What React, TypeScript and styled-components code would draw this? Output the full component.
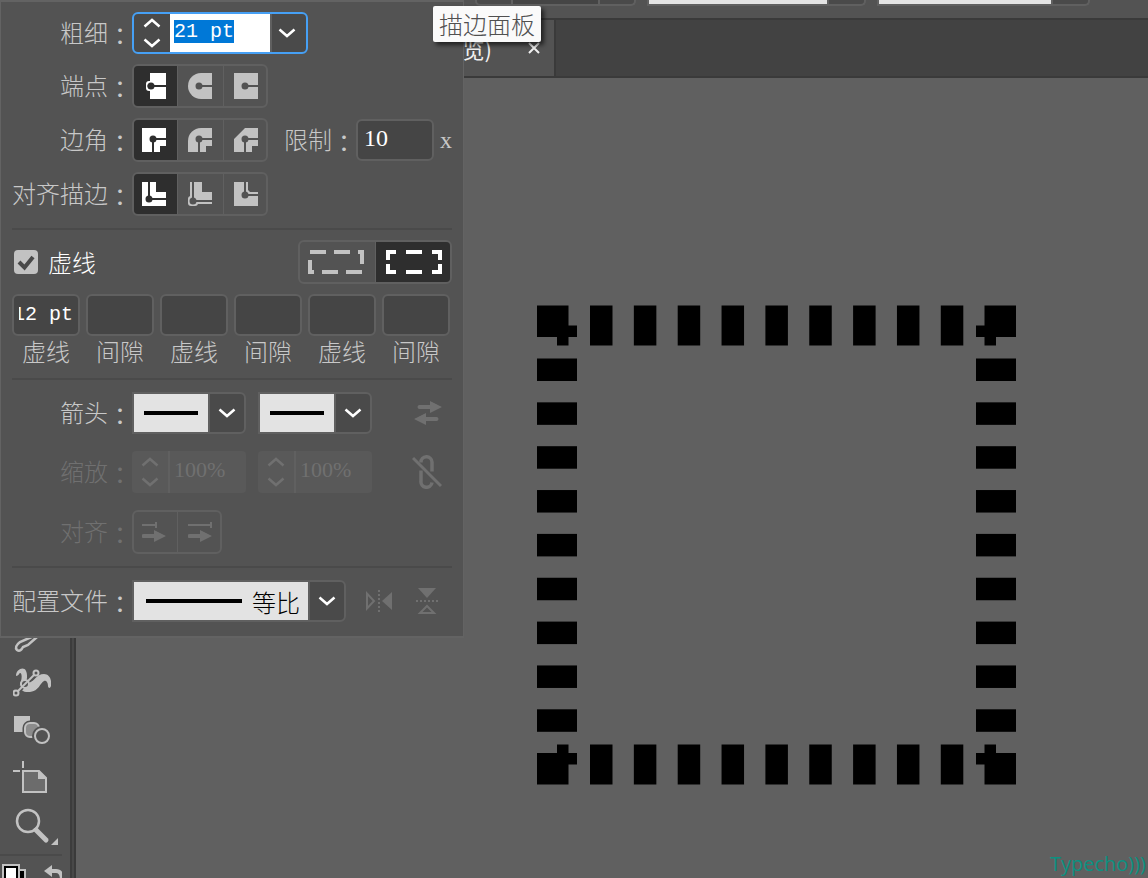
import React, { useEffect, useRef } from "react";
import styled, { createGlobalStyle, css } from "styled-components";

const c = {
  panel: "#535353",
  edge: "#606060",
  field: "#454545",
  active: "#2e2e2e",
  line: "#4a4a4a",
  text: "#c8c8c8",
  off: "#707070",
  icon: "#c2c2c2",
  paper: "#e3e3e3",
};

const GlobalStyle = createGlobalStyle`
  *, *::before, *::after { box-sizing: border-box; }
  body {
    margin: 0;
    background: #606060;
    color: ${c.text};
    font-family: "Noto Sans CJK SC", sans-serif;
    font-weight: 300;
    font-size: 24px;
  }
  button, input, select { font: inherit; color: inherit; margin: 0; padding: 0; border: 0; border-radius: 0; background: none; outline: none; }
  svg { display: block; flex: none; }
`;

/* ---------- application frame ---------- */

const Frame = styled.div`
  position: relative;
  display: flex;
  flex-direction: column;
  height: 100vh;
  overflow: hidden;
`;

const ControlBar = styled.header`
  display: flex;
  gap: 11px;
  height: 20px;
  padding-left: 475px;
  background: ${c.panel};
  border-bottom: 2px solid #3a3a3a;
`;

const BarBox = styled.div<{ $light?: boolean }>`
  display: flex;
  height: 6px;
  padding-right: ${(p) => (p.$light ? 35 : 34)}px;
  background: #4a4a4a;
  border: 2px solid ${c.edge};
  border-top: 0;
  border-radius: 0 0 5px ${(p) => (p.$light ? 0 : 5)}px;
`;

const BarValue = styled.span<{ $light?: boolean; $w: number }>`
  width: ${(p) => p.$w}px;
  margin-left: ${(p) => (p.$light ? 0 : 34)}px;
  background: ${(p) => (p.$light ? c.paper : c.field)};
  border-right: 2px solid ${c.edge};
  border-left: ${(p) => (p.$light ? 0 : 2)}px solid ${c.edge};
`;

const TabBar = styled.nav`
  display: flex;
  height: 58px;
  background: #424242;
  border-bottom: 2px solid #3a3a3a;
`;

const Tab = styled.div`
  display: flex;
  align-items: center;
  justify-content: flex-end;
  gap: 34px;
  width: 556px;
  padding-right: 12px;
  background: ${c.panel};
  border-right: 2px solid #3a3a3a;
  color: #f0f0f0;
  font-size: 22px;
  font-weight: 400;
`;

const TabClose = styled.button`
  display: grid;
  place-items: center;
  width: 16px;
  height: 24px;
`;

const Workspace = styled.main`
  flex: 1;
  display: flex;
  min-height: 0;
`;

const Toolbar = styled.aside`
  display: flex;
  flex-direction: column;
  justify-content: flex-end;
  width: 76px;
  background: ${c.panel};
  border-right: 2px solid #3a3a3a;
  box-shadow: inset -2px 0 #484848, inset -4px 0 #3c3c3c;
`;

const Tool = styled.button`
  display: grid;
  place-items: center;
  flex: none;
  width: 64px;
  height: 48px;
`;

const ToolFooter = styled.div`
  display: flex;
  gap: 16px;
  height: 24px;
  margin: 4px 12px 0 0;
  padding-top: 8px;
  border-top: 2px solid ${c.line};
  overflow: hidden;
`;

const FooterButton = styled.button`
  width: 24px;
  height: 24px;
  margin-left: 2px;
  flex: none;
`;

const Canvas = styled.section`
  position: relative;
  flex: 1;
  background: #606060;
`;

const Artwork = styled.svg`
  position: absolute;
  left: 461px;
  top: 227px;
`;

const Watermark = styled.span`
  position: absolute;
  right: 2px;
  bottom: 0;
  color: #0c9180;
  font: 400 20px/28px "Open Sans", sans-serif;
`;

const Tooltip = styled.div`
  position: absolute;
  left: 433px;
  top: 6px;
  padding: 0 6px;
  background: #fafafa;
  border-radius: 2px;
  box-shadow: 3px 3px 4px rgba(0, 0, 0, 0.6);
  color: #505050;
  line-height: 36px;
`;

/* ---------- stroke panel ---------- */

const Panel = styled.form`
  position: absolute;
  left: 0;
  top: 0;
  display: flex;
  flex-direction: column;
  gap: 10px;
  width: 464px;
  padding: 10px 11px 14px;
  background: ${c.panel};
  border: 1px solid #636363;
  border-width: 2px 1px 2px 1px;
`;

const Row = styled.div<{ $off?: boolean }>`
  display: flex;
  align-items: center;
  color: ${(p) => (p.$off ? c.off : c.text)};
`;

const Stack = styled.section<{ $gap: number }>`
  display: flex;
  flex-direction: column;
  gap: ${(p) => p.$gap}px;
`;

const Divider = styled.hr<{ $roomy?: boolean }>`
  width: 440px;
  height: 2px;
  margin: 2px 0 ${(p) => (p.$roomy ? 2 : 0)}px;
  border: 0;
  background: ${c.line};
`;

const labelText = css`
  line-height: 30px;
  white-space: nowrap;
`;

const Caption = styled.label<{ $inline?: boolean }>`
  ${labelText}
  flex: none;
  width: ${(p) => (p.$inline ? "auto" : "120px")};
  margin-left: ${(p) => (p.$inline ? 16 : 0)}px;
  padding-bottom: 2px;
  text-align: right;
`;

const Colon = styled.span`
  font-family: "Noto Sans CJK TC", sans-serif;
  font-weight: 400;
  line-height: 0;
  vertical-align: -3px;
`;

const Spacer = styled.span`
  flex: 1;
`;

const Segments = styled.div`
  display: flex;
  height: 44px;
  border: 2px solid ${c.edge};
  border-radius: 6px;
  overflow: hidden;
`;

const Segment = styled.button<{ $on?: boolean; $wide?: boolean }>`
  display: flex;
  align-items: center;
  width: ${(p) => (p.$wide ? 76 : 46)}px;
  padding-left: 10px;
  border-right: 1px solid ${c.edge};
  background: ${(p) => (p.$on ? c.active : "transparent")};
  color: ${(p) => (p.$on ? "#ffffff" : c.icon)};
  --hole: ${(p) => (p.$on ? c.active : c.panel)};
  &:first-child { width: ${(p) => (p.$wide ? 76 : 44)}px; padding-left: 8px; }
  &:last-child { width: ${(p) => (p.$wide ? 74 : 42)}px; border-right: 0; }
  &:disabled { color: ${c.off}; }
`;

const Combo = styled.div`
  display: flex;
  width: 176px;
  height: 42px;
  border: 2px solid #46a0f5;
  border-radius: 6px;
  background: #4a4a4a;
  overflow: hidden;
`;

const Spinner = styled.span<{ $off?: boolean }>`
  display: flex;
  flex-direction: column;
  justify-content: center;
  align-items: center;
  gap: 2px;
  width: 36px;
  color: ${(p) => (p.$off ? c.off : "#ffffff")};
`;

const SpinButton = styled.button`
  display: grid;
  place-items: center;
  width: 36px;
  height: 18px;
`;

const mono = css`
  font-family: "Liberation Mono", monospace;
  font-size: 20px;
  font-weight: 400;
`;

const numerals = css`
  font-family: "Liberation Serif", serif;
  font-size: 24px;
  font-weight: 400;
`;

const WeightInput = styled.input`
  ${mono}
  width: 100px;
  padding: 0 4px 4px;
  background: #ffffff;
  color: #222222;
  &::selection { background: #0078d7; color: #ffffff; }
`;

const ChevronButton = styled.button`
  display: grid;
  place-items: center;
  width: 36px;
  padding-right: 4px;
  border-left: 2px solid ${c.edge};
  color: #ffffff;
`;

const fieldBox = css`
  height: 42px;
  background: ${c.field};
  border: 2px solid ${c.edge};
  border-radius: 6px;
  color: #ffffff;
`;

const DashInput = styled.input`
  ${mono}
  ${fieldBox}
  width: 68px;
  padding: 0 5px 2px;
`;

const LimitInput = styled.input`
  ${numerals}
  ${fieldBox}
  width: 78px;
  padding: 0 6px 4px;
`;

const Unit = styled.span`
  ${numerals}
  margin-left: 6px;
`;

const CheckLabel = styled.label`
  ${labelText}
  display: grid;
  grid-template-columns: 24px auto;
  column-gap: 10px;
  align-items: center;
  padding-left: 2px;
  color: #ffffff;
  & > svg { grid-area: 1 / 1; color: #484848; pointer-events: none; }
`;

const CheckBox = styled.input`
  grid-area: 1 / 1;
  appearance: none;
  width: 24px;
  height: 24px;
  border-radius: 4px;
  background: ${c.icon};
`;

const DashGrid = styled.div`
  display: grid;
  grid-template-columns: repeat(6, 68px);
  gap: 6px;
`;

const DashCell = styled.label`
  ${labelText}
  display: flex;
  flex-direction: column;
  align-items: center;
`;

const Picker = styled.span<{ $w: number }>`
  display: grid;
  grid-template-columns: 1fr 34px;
  width: ${(p) => p.$w}px;
  height: 42px;
  margin-right: 12px;
  border: 2px solid ${c.edge};
  border-radius: 0 6px 6px 0;
  background: linear-gradient(to left, #4a4a4a 34px, ${c.edge} 34px, ${c.edge} 36px, ${c.paper} 36px);
  align-items: center;
  & > svg { grid-row: 1; pointer-events: none; }
  & > svg:last-child { grid-column: 2; justify-self: center; color: #ffffff; }
`;

const PickerSelect = styled.select<{ $pad: number }>`
  grid-area: 1 / 1 / 2 / 3;
  appearance: none;
  width: 100%;
  height: 38px;
  padding-left: ${(p) => p.$pad}px;
  color: #000000;
`;

const PreviewLine = styled.svg`
  grid-column: 1;
  grid-row: 1;
  margin-left: 10px;
`;

const ScaleBox = styled.span`
  display: flex;
  width: 114px;
  height: 42px;
  margin-right: 12px;
  border-radius: 4px;
  background: #595959;
`;

const ScaleInput = styled.input`
  ${numerals}
  font-size: 22px;
  width: 78px;
  padding: 0 4px 4px;
  border-left: 2px solid ${c.edge};
  color: ${c.off};
`;

const IconButton = styled.button<{ $w: number; $after?: number }>`
  display: grid;
  place-items: center;
  width: ${(p) => p.$w}px;
  height: 34px;
  margin-right: ${(p) => p.$after ?? 10}px;
  color: ${c.off};
`;

/* ---------- icons ---------- */

const Chevron = ({ up }: { up?: boolean }) => (
  <svg width="18" height="12" viewBox="0 0 18 12" fill="none" stroke="currentColor" strokeWidth="2.5">
    <path d={up ? "M1.500 9.500 9 3l7.500 6.500" : "M1.500 2.500 9 9l7.500-6.500"} />
  </svg>
);

const Anchor = ({ x, y, down }: { x: number; y: number; down?: "up" | "down" }) => (
  <g fill="var(--hole)" stroke="var(--hole)" strokeWidth="2">
    <path d={`M${x} ${y}H24` + (down === "down" ? `M${x} ${y}V24` : down === "up" ? `M${x} ${y}V0` : "")} />
    <circle cx={x} cy={y} r="2.5" />
  </g>
);

const capIcons = [
  <svg width="24" height="26" viewBox="0 0 24 26" fill="currentColor">
    <path d="M8 0h16v26H8z" />
    <rect x="4" y="8" width="10" height="10" rx="3" />
    <path d="M8 10.500h3v5H8a2.500 2.500 0 0 1 0-5z" fill="var(--hole)" />
    <Anchor x={9} y={13} />
  </svg>,
  <svg width="24" height="26" viewBox="0 0 24 26" fill="currentColor">
    <path d="M24 0H13a13 13 0 0 0 0 26h11z" />
    <Anchor x={11} y={13} />
  </svg>,
  <svg width="24" height="26" viewBox="0 0 24 26" fill="currentColor">
    <path d="M0 0h24v26H0z" />
    <Anchor x={11} y={13} />
  </svg>,
];

const joinIcons = [
  "M0 0h24v18h-6v6H0z",
  "M24 0H13A13 13 0 0 0 0 13v11h18v-6h6z",
  "M24 0H11L0 11v13h18v-6h6z",
].map((d) => (
  <svg width="24" height="24" viewBox="0 0 24 24" fill="currentColor">
    <path d={d} />
    <Anchor x={11} y={11} down="down" />
  </svg>
));

const alignIcons = [
  <svg width="24" height="24" viewBox="0 0 24 24" fill="currentColor">
    <path d="M0 0h14v10h10v14H0z" />
    <Anchor x={7} y={17} down="up" />
  </svg>,
  <svg width="24" height="24" viewBox="0 0 24 24" fill="currentColor">
    <path d="M2 0h12v10h10v12H2z" />
    <rect x="0" y="14" width="10" height="10" rx="3" />
    <Anchor x={5} y={19} down="up" />
  </svg>,
  <svg width="24" height="24" viewBox="0 0 24 24" fill="currentColor">
    <path d="M0 0h14v8l2 2h8v14H0z" />
    <Anchor x={11} y={13} down="up" />
  </svg>,
];

const dashIcons = [
  <svg width="56" height="24" viewBox="0 0 56 24" fill="currentColor">
    <path d="M2 0h16v4H2zM26 0h16v4H26zM50 0h6v14h-4V4h-2zM0 10h4v10h2v4H0zM14 20h16v4H14zM38 20h16v4H38z" />
  </svg>,
  <svg width="56" height="24" viewBox="0 0 56 24" fill="currentColor">
    <path d="M0 0h10v4H4v6H0zM20 0h16v4H20zM46 0h10v10h-4V4h-6zM0 14h4v6h6v4H0zM20 20h16v4H20zM52 14h4v10H46v-4h6z" />
  </svg>,
];

const arrowAlignIcons = ["M0 2h13V0h2v6h-2V4H0z", "M0 2h22V0h2v6h-2V4H0z"].map((d) => (
  <svg width="24" height="20" viewBox="0 0 24 20" fill="currentColor">
    <path d={d} />
    <path d="M1.500 12H12V8l12 6-12 6v-4H1.500a2 2 0 0 1 0-4z" />
  </svg>
));

const SwapIcon = () => (
  <svg width="28" height="24" viewBox="0 0 28 24" fill="currentColor">
    <path d="M5.500 4H16V0l12 6-12 6V8H5.500a2 2 0 0 1 0-4zM22.500 16H12v-4L0 18l12 6v-4h10.500a2 2 0 0 0 0-4z" />
  </svg>
);

const UnlinkIcon = () => (
  <svg width="30" height="34" viewBox="0 0 30 34" fill="none" stroke="currentColor" strokeWidth="3.5">
    <path d="M9 7.500A5.500 5.500 0 0 1 20 7v9.500M9 15.500V26a5.500 5.500 0 0 0 11 1.500" />
    <path d="M1 3 29 31" strokeWidth="3" />
  </svg>
);

const FlipXIcon = () => (
  <svg width="26" height="24" viewBox="0 0 26 24" fill="none" stroke="currentColor" strokeWidth="2">
    <path d="M1 4.500v15L8 12z" />
    <path d="M13 1v22" strokeDasharray="2 2" />
    <path d="M26 3v18l-10-9z" fill="currentColor" stroke="none" />
  </svg>
);

const FlipYIcon = () => (
  <svg width="22" height="28" viewBox="0 0 22 28" fill="none" stroke="currentColor" strokeWidth="2">
    <path d="M2 1h18l-9 10z" fill="currentColor" stroke="none" />
    <path d="M0 14h22" strokeDasharray="2 2" />
    <path d="M4 26h14l-7-7z" />
  </svg>
);

const PencilIcon = () => (
  <svg width="36" height="48" viewBox="0 0 36 48" fill="none" stroke={c.icon} strokeWidth="2.5">
    <path d="M22 25 6 32c-4 3-5 6-3 8 3 2 5-1 6-3l5-2 9-8" />
  </svg>
);

const PuppetIcon = () => (
  <svg width="38" height="30" viewBox="1 0 38 30">
    <path
      d="M4 9C4 2 12-1 14 4c2 4 0 8 2 10 5 4 7-7 16-7 5 0 8 5 7 12-1 3-3 2-3 0 0-4-2-6-4-5-4 2-5 10-14 11C9 26 6 20 9 14c1-3 1-8-1-8-1 0-1 3-4 3z"
      fill={c.icon}
    />
    <g fill={c.panel} stroke={c.icon} strokeWidth="2">
      <path d="M4 26 24 6" stroke={c.panel} strokeWidth="5" />
      <circle cx="13" cy="17" r="4" />
      <path d="M5 25 23 7" />
      <circle cx="4" cy="26" r="2.5" />
      <circle cx="24" cy="6" r="2.5" />
    </g>
  </svg>
);

const BlendIcon = () => (
  <svg width="36" height="28" viewBox="0 0 36 28">
    <path d="M0 0h16v16H0z" fill={c.icon} />
    <rect x="11" y="7" width="14" height="14" rx="5" fill="#8c8c8c" stroke={c.panel} strokeWidth="5" />
    <rect x="11" y="7" width="14" height="14" rx="5" fill="#8c8c8c" stroke={c.icon} strokeWidth="2" />
    <circle cx="28" cy="20" r="8" fill={c.panel} stroke={c.panel} strokeWidth="4" />
    <circle cx="28" cy="20" r="7" fill={c.panel} stroke={c.icon} strokeWidth="2" />
  </svg>
);

const ArtboardIcon = () => (
  <svg width="38" height="34" viewBox="0 0 38 34">
    <path d="M10 0v7M0 10h7" stroke={c.icon} strokeWidth="2" />
    <path d="M10 10h16l7 7v14H10z" fill="#6c6c6c" stroke={c.icon} strokeWidth="2" />
    <path d="M25 9v9h9z" fill={c.icon} />
  </svg>
);

const ZoomIcon = () => (
  <svg width="52" height="38" viewBox="0 0 52 38" fill="none" stroke={c.icon}>
    <circle cx="22" cy="14" r="11" strokeWidth="2.5" />
    <path d="m30 23 10 10" strokeWidth="5" strokeLinecap="round" />
    <path d="M52 31v7h-7z" fill={c.icon} stroke="none" />
  </svg>
);

const SwatchIcon = () => (
  <svg width="24" height="24" viewBox="0 0 24 24">
    <path d="M15 6h8v18h-8z" fill="#000" stroke={c.icon} strokeWidth="2" />
    <path d="M1 1h16v23H1z" fill="#fff" stroke={c.icon} strokeWidth="2" />
    <path d="M3 3h12v21H3z" fill="#fff" stroke="#000" strokeWidth="2" />
  </svg>
);

const UndoIcon = () => (
  <svg width="22" height="24" viewBox="0 0 22 24">
    <path d="M0 7 8 1v12z" fill={c.icon} />
    <path d="M6 7h6c4 0 6 3 6 9" fill="none" stroke={c.icon} strokeWidth="4" />
  </svg>
);

/* ---------- drawn square with aligned dashes ---------- */

const dashStarts = Array.from({ length: 9 }, (_, i) => 53 + i * 43.85);
const corner = "M0 0H31.500V20H40V31.500H31.500V40H20V31.500H0z";

const DashedSquare = () => (
  <Artwork width="479" height="480" viewBox="0 0 479 480" role="img" aria-label="虚线">
    {dashStarts.map((s) => (
      <g key={s}>
        <rect x={s} y="0.5" width="22.5" height="40" />
        <rect x={s} y="439.5" width="22.5" height="40" />
        <rect x="0" y={s + 0.5} width="40" height="22.5" />
        <rect x="439" y={s + 0.5} width="40" height="22.5" />
      </g>
    ))}
    <path d={corner} transform="translate(0 .5)" />
    <path d={corner} transform="translate(479 .5) scale(-1 1)" />
    <path d={corner} transform="translate(0 479.5) scale(1 -1)" />
    <path d={corner} transform="translate(479 479.5) scale(-1 -1)" />
  </Artwork>
);

/* ---------- composed controls ---------- */

const Label = ({ text, htmlFor, inline }: { text: string; htmlFor?: string; inline?: boolean }) => (
  <Caption htmlFor={htmlFor} $inline={inline} as={htmlFor ? "label" : "span"}>
    {text}
    <Colon>：</Colon>
  </Caption>
);

const SegmentGroup = ({ name, icons, on, wide, off }: { name: string; icons: React.ReactNode[]; on?: number; wide?: boolean; off?: boolean }) => (
  <Segments role="group" aria-label={name}>
    {icons.map((icon, i) => (
      <Segment key={i} type="button" $on={on === i} $wide={wide} disabled={off} aria-pressed={on === i} aria-label={`${name} ${i + 1}`}>
        {icon}
      </Segment>
    ))}
  </Segments>
);

const Spin = ({ off }: { off?: boolean }) => (
  <Spinner $off={off}>
    <SpinButton type="button" disabled={off} aria-label="+"><Chevron up /></SpinButton>
    <SpinButton type="button" disabled={off} aria-label="-"><Chevron /></SpinButton>
  </Spinner>
);

const ArrowPicker = ({ id, label }: { id: string; label?: string }) => (
  <Picker $w={114}>
    <PickerSelect id={id} $pad={10} aria-label={label}>
      <option value="none" />
    </PickerSelect>
    <PreviewLine width="54" height="4"><path d="M0 0h54v4H0z" /></PreviewLine>
    <Chevron />
  </Picker>
);

export default function App() {
  const weight = useRef<HTMLInputElement>(null);
  const firstDash = useRef<HTMLInputElement>(null);

  useEffect(() => {
    weight.current?.focus();
    weight.current?.select();
    if (firstDash.current) firstDash.current.scrollLeft = firstDash.current.scrollWidth;
  }, []);

  return (
    <>
      <GlobalStyle />
      <Frame>
        <ControlBar>
          <BarBox><BarValue $w={89} /></BarBox>
          <BarBox $light><BarValue $light $w={180} /></BarBox>
          <BarBox $light><BarValue $light $w={174} /></BarBox>
        </ControlBar>
        <TabBar>
          <Tab>
            <span>览)</span>
            <TabClose type="button" aria-label="关闭">
              <svg width="12" height="12" viewBox="0 0 12 12" stroke="#f0f0f0" strokeWidth="2">
                <path d="m1 1 10 10M11 1 1 11" />
              </svg>
            </TabClose>
          </Tab>
        </TabBar>
        <Workspace>
          <Toolbar>
            <Tool type="button" aria-label="铅笔"><PencilIcon /></Tool>
            <Tool type="button" aria-label="变形"><PuppetIcon /></Tool>
            <Tool type="button" aria-label="混合"><BlendIcon /></Tool>
            <Tool type="button" aria-label="画板"><ArtboardIcon /></Tool>
            <Tool type="button" aria-label="缩放"><ZoomIcon /></Tool>
            <ToolFooter>
              <FooterButton type="button" aria-label="填色"><SwatchIcon /></FooterButton>
              <FooterButton type="button" aria-label="互换"><UndoIcon /></FooterButton>
            </ToolFooter>
          </Toolbar>
          <Canvas>
            <DashedSquare />
            <Watermark>Typecho)))</Watermark>
          </Canvas>
        </Workspace>

        <Panel onSubmit={(e) => e.preventDefault()}>
          <Stack $gap={10}>
            <Row>
              <Label text="粗细" htmlFor="weight" />
              <Combo>
                <Spin />
                <WeightInput id="weight" ref={weight} defaultValue="21 pt" />
                <ChevronButton type="button" aria-label="粗细"><Chevron /></ChevronButton>
              </Combo>
            </Row>
            <Row>
              <Label text="端点" />
              <SegmentGroup name="端点" icons={capIcons} on={0} />
            </Row>
            <Row>
              <Label text="边角" />
              <SegmentGroup name="边角" icons={joinIcons} on={0} />
              <Label text="限制" htmlFor="limit" inline />
              <LimitInput id="limit" defaultValue="10" />
              <Unit>x</Unit>
            </Row>
            <Row>
              <Label text="对齐描边" />
              <SegmentGroup name="对齐描边" icons={alignIcons} on={0} />
            </Row>
          </Stack>
          <Divider />
          <Stack $gap={10}>
            <Row>
              <CheckLabel>
                <CheckBox type="checkbox" defaultChecked />
                <svg width="24" height="24" viewBox="0 0 24 24" fill="none" stroke="currentColor" strokeWidth="4">
                  <path d="m5 12 5.500 5.500L19 7" />
                </svg>
                虚线
              </CheckLabel>
              <Spacer />
              <SegmentGroup name="虚线" icons={dashIcons} on={1} wide />
            </Row>
            <DashGrid>
              {["虚线", "间隙", "虚线", "间隙", "虚线", "间隙"].map((t, i) => (
                <DashCell key={i}>
                  <DashInput ref={i === 0 ? firstDash : undefined} defaultValue={i === 0 ? "12 pt" : ""} />
                  {t}
                </DashCell>
              ))}
            </DashGrid>
          </Stack>
          <Divider $roomy />
          <Stack $gap={17}>
            <Row>
              <Label text="箭头" htmlFor="arrow-start" />
              <ArrowPicker id="arrow-start" />
              <ArrowPicker id="arrow-end" label="箭头" />
              <Spacer />
              <IconButton $w={28} type="button" aria-label="互换箭头"><SwapIcon /></IconButton>
            </Row>
            <Row $off>
              <Label text="缩放" htmlFor="scale-start" />
              <ScaleBox><Spin off /><ScaleInput id="scale-start" defaultValue="100%" disabled /></ScaleBox>
              <ScaleBox><Spin off /><ScaleInput aria-label="缩放" defaultValue="100%" disabled /></ScaleBox>
              <Spacer />
              <IconButton $w={30} type="button" aria-label="链接"><UnlinkIcon /></IconButton>
            </Row>
            <Row $off>
              <Label text="对齐" />
              <SegmentGroup name="对齐" icons={arrowAlignIcons} off />
            </Row>
          </Stack>
          <Divider $roomy />
          <Row>
            <Label text="配置文件" htmlFor="profile" />
            <Picker $w={214}>
              <PickerSelect id="profile" $pad={118}>
                <option>等比</option>
              </PickerSelect>
              <PreviewLine width="98" height="4"><path d="M2 0h96v4H2z" /></PreviewLine>
              <Chevron />
            </Picker>
            <Spacer />
            <IconButton $w={26} $after={20} type="button" aria-label="横向翻转"><FlipXIcon /></IconButton>
            <IconButton $w={30} type="button" aria-label="纵向翻转"><FlipYIcon /></IconButton>
          </Row>
        </Panel>
        <Tooltip role="tooltip">描边面板</Tooltip>
      </Frame>
    </>
  );
}
